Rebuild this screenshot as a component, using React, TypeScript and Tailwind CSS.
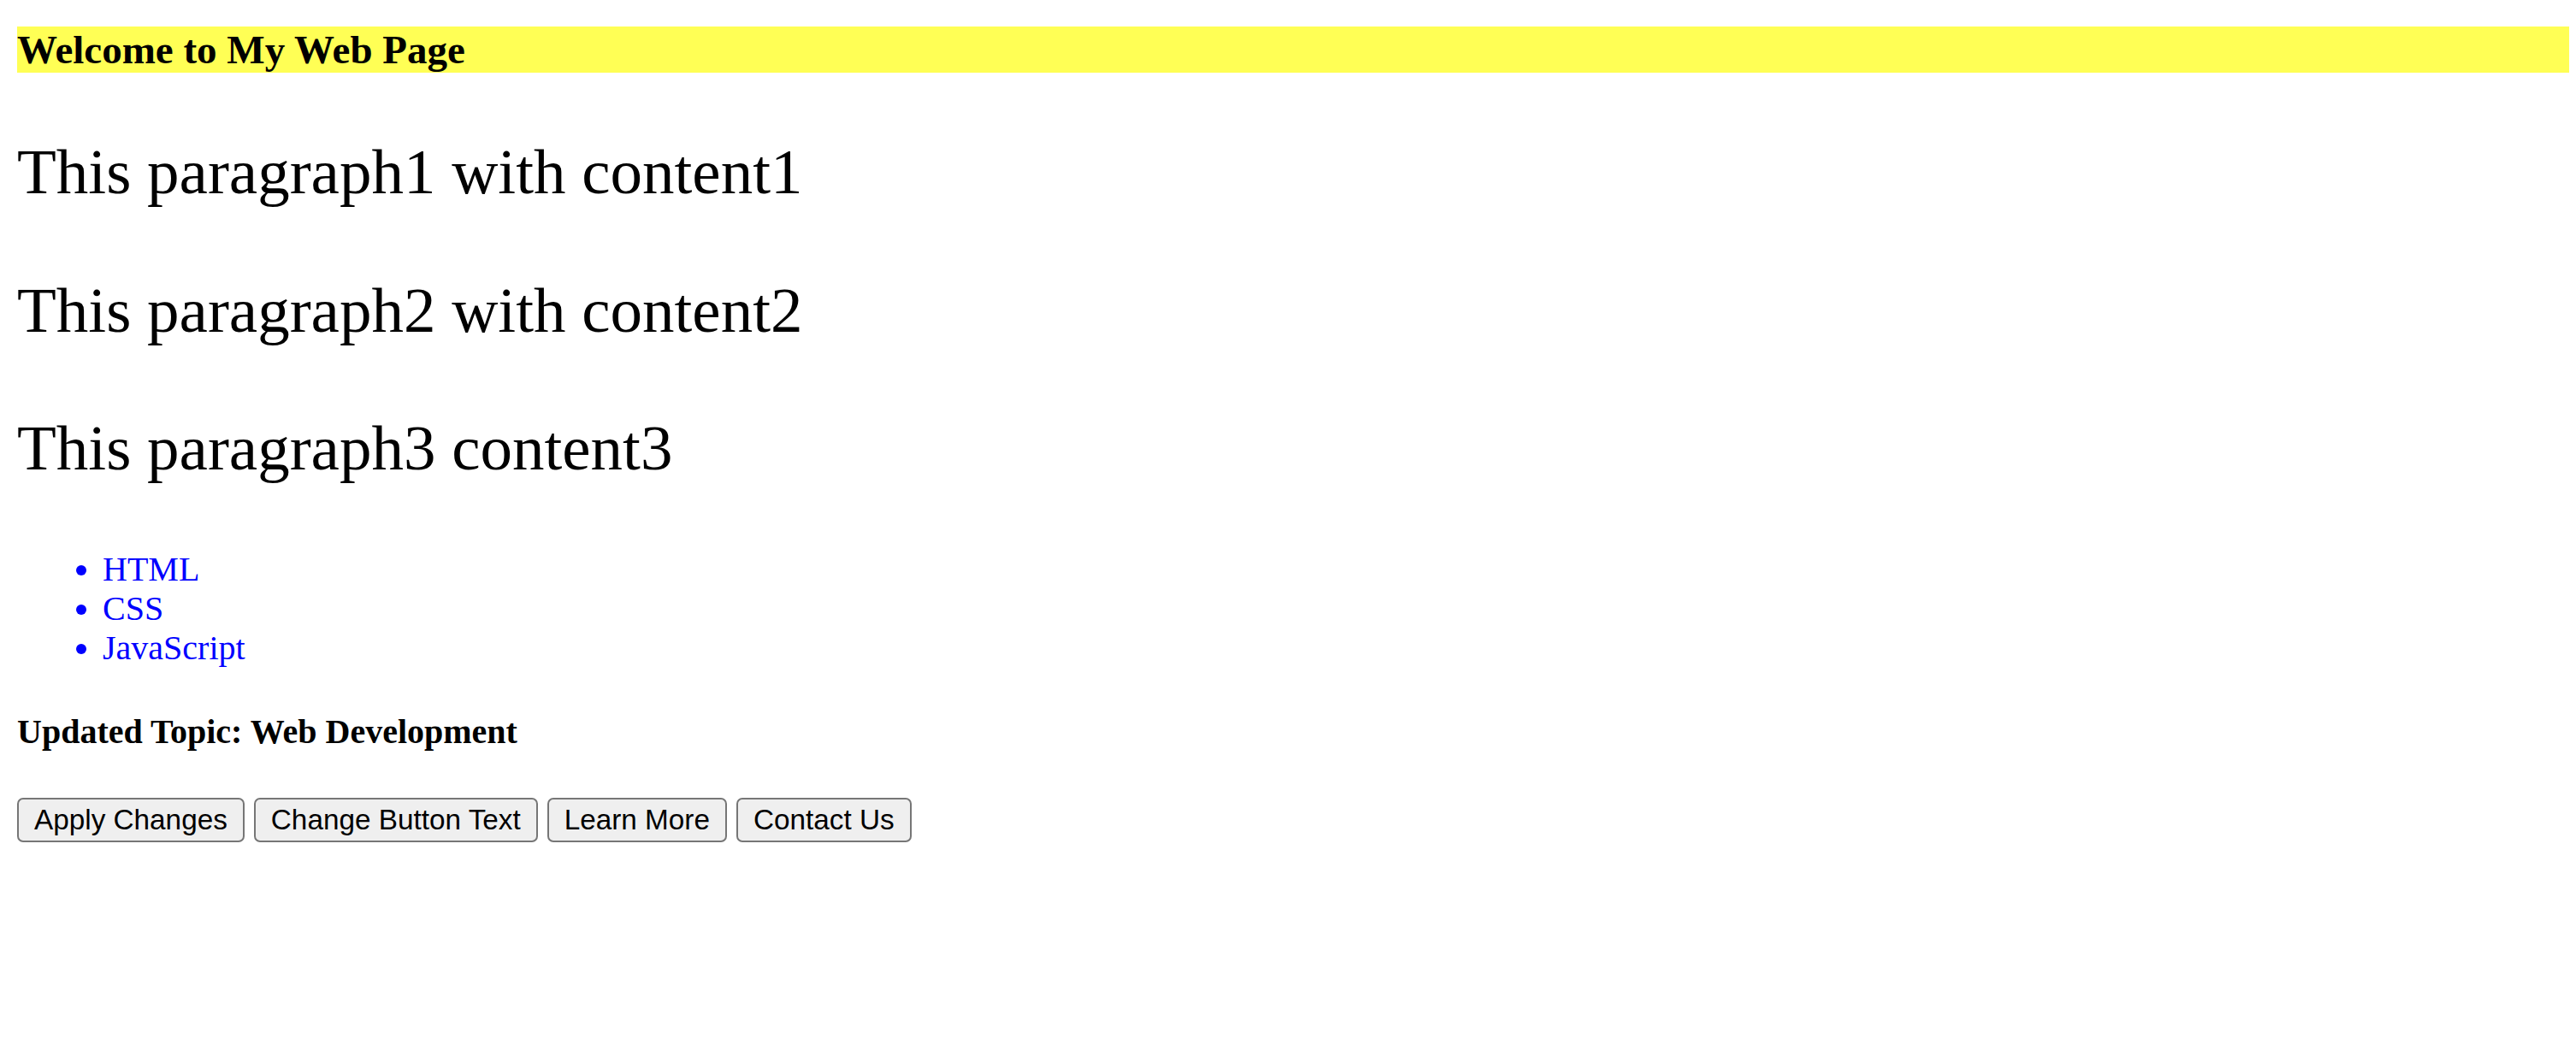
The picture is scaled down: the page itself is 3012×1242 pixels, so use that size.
export default function App() {
  const topics = ["HTML", "CSS", "JavaScript"];
  const buttons = ["Apply Changes", "Change Button Text", "Learn More", "Contact Us"];

  return (
    <div className="min-h-[1242px] bg-white pl-[20px] pr-[8px] pt-[31px] text-black font-['Liberation_Serif',serif]">
      <h3 className="h-[54px] bg-[#ffff55] text-[47px] font-bold leading-[54px]">
        Welcome to My Web Page
      </h3>

      <p className="mt-[73px] text-[75px] leading-[86px]">This paragraph1 with content1</p>
      <p className="mt-[76px] text-[75px] leading-[86px]">This paragraph2 with content2</p>
      <p className="mt-[75px] text-[75px] leading-[86px]">This paragraph3 content3</p>

      <ul className="mt-[76px] list-disc pl-[100px] text-[40px] leading-[46px] text-[#0000ff]">
        {topics.map((t) => (
          <li key={t}>{t}</li>
        ))}
      </ul>

      <h4 className="mt-[52px] text-[40px] font-bold leading-[46px]">Updated Topic: Web Development</h4>

      <div className="mt-[54px] flex gap-[11px]">
        {buttons.map((b) => (
          <button
            key={b}
            className="flex h-[52px] items-center rounded-[7px] border-2 border-[#767676] bg-[#efefef] px-[18px] text-[33.3px] font-['Liberation_Sans',Arial,sans-serif] text-black"
          >
            {b}
          </button>
        ))}
      </div>
    </div>
  );
}
